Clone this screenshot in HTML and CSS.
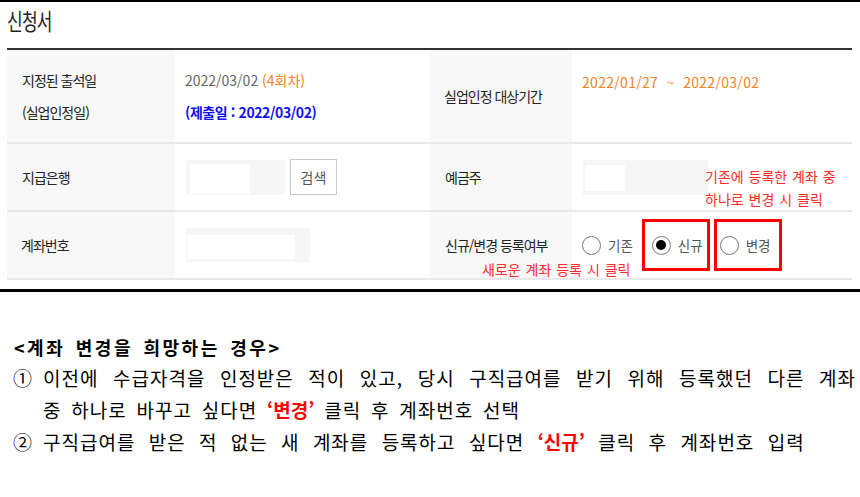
FILE: index.html
```html
<!DOCTYPE html>
<html lang="ko">
<head>
  <meta charset="UTF-8">
  <meta name="viewport" content="width=device-width, initial-scale=1.0">
  <title>신청서</title>
  <link rel="stylesheet" href="styles.css">
</head>
<body>
  <div class="topbar"></div>
  <h1 class="title"><span>신청서</span></h1>

  <div class="form">
    <div class="th two">지정된 출석일<br>(실업인정일)</div>
    <div class="td two">
      <div>
        <span class="gray">2022/03/02</span> <span class="orange">(4회차)</span><br>
        <span class="blue">(제출일 : 2022/03/02)</span>
      </div>
    </div>
    <div class="th">실업인정 대상기간</div>
    <div class="td top orange">2022/01/27 &nbsp;~&nbsp; 2022/03/02</div>

    <div class="th">지급은행</div>
    <div class="td">
      <span class="field bank"><span class="fill"></span></span>
      <button type="button" class="btn">검색</button>
    </div>
    <div class="th">예금주</div>
    <div class="td">
      <span class="field holder"><span class="fill"></span></span>
    </div>

    <div class="th">계좌번호</div>
    <div class="td">
      <span class="field account"><span class="fill"></span></span>
    </div>
    <div class="th">신규/변경 등록여부</div>
    <div class="td radios">
      <label class="opt first"><span class="radio"></span>기존</label>
      <label class="opt mark new"><span class="radio on"></span>신규</label>
      <label class="opt mark change"><span class="radio"></span>변경</label>
    </div>

    <!-- annotations drawn over the table -->
    <div class="note note-change">기존에 등록한 계좌 중<br>하나로 변경 시 클릭</div>
    <div class="note note-new">새로운 계좌 등록 시 클릭</div>
  </div>

  <div class="rule"></div>

  <div class="notes">
    <p class="notes-head">&lt;계좌 변경을 희망하는 경우&gt;</p>
    <div class="item">
      <span class="num">①</span>
      <div class="body">
        <p class="just">이전에 수급자격을 인정받은 적이 있고, 당시 구직급여를 받기 위해 등록했던 다른 계좌</p>
        <p>중 하나로 바꾸고 싶다면 <b class="hl">‘변경’</b> 클릭 후 계좌번호 선택</p>
      </div>
    </div>
    <div class="item">
      <span class="num">②</span>
      <div class="body">
        <p class="wide">구직급여를 받은 적 없는 새 계좌를 등록하고 싶다면 <b class="hl">‘신규’</b> 클릭 후 계좌번호 입력</p>
      </div>
    </div>
  </div>
</body>
</html>
```

FILE: styles.css
```css
/* styles.css */

body {
  margin: 0;
  padding: 0;
  font-family: "Noto Sans CJK KR", "Noto Sans", sans-serif;
  color: #333;
  background: #fff;
}

.topbar {
  height: 2px;
  background: #000;
}

.title {
  margin: 0;
  height: 46px;
  padding-left: 7px;
  font-size: 23px;
  font-weight: normal;
  line-height: 36px;
  color: #222;
}

.title span {
  display: inline-block;
  letter-spacing: -1px;
  transform: scaleX(0.74);
  transform-origin: left center;
}

/* table */

.form {
  position: relative;
  display: grid;
  grid-template-columns: 168px 255px 142px 1fr;
  grid-template-rows: 94px 68px 68px;
  margin: 0 8px 0 7px;
  border-top: 2px solid #333;
  font-size: 14px;
}

.th,
.td {
  display: flex;
  align-items: center;
  border-bottom: 2px solid #e9e9e9;
}

.th {
  padding-left: 15px;
  background: #f8f8f8;
  color: #222;
  letter-spacing: -1px;
}

.th:nth-child(3n) {
  padding-left: 14px;
}

.td {
  padding-left: 10px;
}

.two {
  line-height: 32px;
}

.td.top {
  align-items: flex-start;
  padding-top: 16px;
  line-height: 32px;
  letter-spacing: 0.3px;
}

.gray {
  color: #666;
}

.orange {
  color: #f5821f;
}

.blue {
  color: #1010f0;
  font-weight: bold;
  letter-spacing: -0.4px;
}

/* masked input boxes */

.field {
  display: inline-block;
  box-sizing: border-box;
  background: #f6f6f6;
}

.fill {
  display: block;
  background: #fff;
}

.field.bank {
  width: 99px;
  height: 35px;
  margin-left: 1px;
  padding: 4px 0 1px 4px;
}

.field.bank .fill {
  width: 60px;
  height: 30px;
}

.field.holder {
  width: 125px;
  height: 35px;
  margin-left: 1px;
  padding: 5px 0 0 2px;
}

.field.holder .fill {
  width: 40px;
  height: 26px;
}

.field.account {
  width: 124px;
  height: 34px;
  margin-left: 1px;
  padding: 7px 0 0 1px;
}

.field.account .fill {
  width: 108px;
  height: 24px;
}

.btn {
  width: 47px;
  height: 36px;
  margin-left: 5px;
  padding: 0;
  border: 1px solid #c8c8c8;
  background: #fff;
  color: #555;
  font-family: inherit;
  font-size: 14px;
}

/* radios */

.radios {
  padding-left: 10px;
}

.opt {
  display: flex;
  align-items: center;
  gap: 7px;
  color: #555;
  font-size: 13.5px;
}

.radio {
  display: flex;
  align-items: center;
  justify-content: center;
  box-sizing: border-box;
  width: 19px;
  height: 19px;
  border: 1px solid #777;
  border-radius: 50%;
  background: #fff;
}

.radio.on::after {
  content: "";
  width: 10px;
  height: 10px;
  border-radius: 50%;
  background: #000;
}

.mark {
  box-sizing: border-box;
  height: 52px;
  border: 3px solid #f00;
}

.new {
  margin-left: 9px;
  padding: 0 4px 0 7px;
}

.change {
  margin-left: 4px;
  padding: 0 8px 0 3px;
}

.note {
  position: absolute;
  color: #ff2a2a;
  font-size: 14px;
  line-height: 23px;
  letter-spacing: 0;
  word-spacing: 1px;
}

.note-change {
  left: 698px;
  top: 115px;
}

.note-new {
  left: 475px;
  top: 208px;
}

.rule {
  height: 3px;
  margin-top: 9px;
  background: #000;
}

/* notes below */

.notes {
  padding: 0 4px 0 13px;
  color: #000;
  font-size: 19px;
  letter-spacing: 1px;
  word-spacing: 3.5px;
}

.notes p {
  margin: 0;
  line-height: 32px;
}

.notes .notes-head {
  margin: 40px 0 0 1px;
  line-height: 30px;
  font-size: 18px;
  font-weight: bold;
  letter-spacing: 2.5px;
  word-spacing: 3px;
}

.item {
  display: flex;
}

.num {
  width: 30px;
  flex: none;
  line-height: 32px;
  letter-spacing: 0;
}

.body {
  flex: 1;
}

.notes .just {
  text-align: justify;
  text-align-last: justify;
}

.notes .wide {
  word-spacing: 7px;
}

.hl {
  color: #f00;
  letter-spacing: 0;
}
```
